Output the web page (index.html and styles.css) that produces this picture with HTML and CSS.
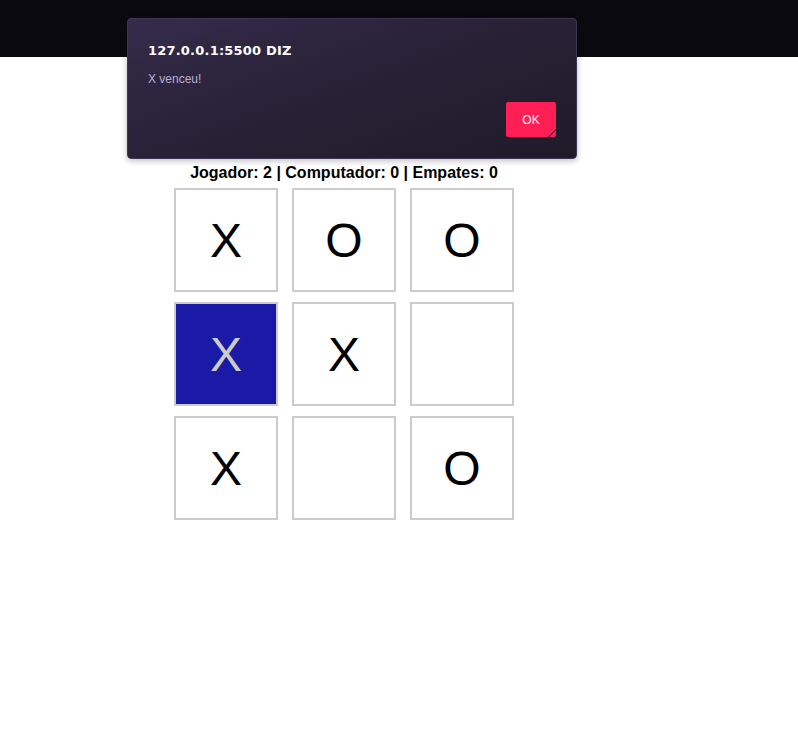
FILE: index.html
```html
<!DOCTYPE html>
<html lang="pt">
<head>
<meta charset="utf-8">
<title>Jogo da Velha</title>
<link rel="stylesheet" href="styles.css">
</head>
<body>
<div class="topbar"></div>
<main class="game">
  <div class="score">Jogador: 2 | Computador: 0 | Empates: 0</div>
  <div class="board">
    <div class="cell">X</div>
    <div class="cell">O</div>
    <div class="cell">O</div>
    <div class="cell active">X</div>
    <div class="cell">X</div>
    <div class="cell"></div>
    <div class="cell">X</div>
    <div class="cell"></div>
    <div class="cell">O</div>
  </div>
</main>
<div class="dialog" role="alertdialog">
  <div class="dialog-title">127.0.0.1:5500 DIZ</div>
  <div class="dialog-msg">X venceu!</div>
  <div class="dialog-actions">
    <button class="ok">OK</button>
  </div>
</div>
</body>
</html>
```
FILE: styles.css
```css
html, body {
  margin: 0;
  padding: 0;
  background: #ffffff;
}
body {
  font-family: "Liberation Sans", Arial, sans-serif;
  width: 798px;
  height: 745px;
  overflow: hidden;
  position: relative;
}
.topbar {
  height: 57px;
  background: #0b0a10;
}
.game {
  width: 340px;
  margin-left: 174px;
  padding-top: 107px;
  display: flex;
  flex-direction: column;
  align-items: center;
}
.score {
  font-weight: bold;
  font-size: 16px;
  line-height: 18px;
  color: #000;
  white-space: nowrap;
}
.board {
  margin-top: 6px;
  display: grid;
  grid-template-columns: repeat(3, 104px);
  grid-auto-rows: 104px;
  column-gap: 14px;
  row-gap: 10px;
}
.cell {
  box-sizing: border-box;
  border: 2px solid #cccccc;
  background: #fff;
  display: flex;
  align-items: center;
  justify-content: center;
  font-size: 48px;
  color: #000;
}
.cell.active {
  background: #1a1aa6;
  color: #cccccc;
}
.dialog {
  position: absolute;
  left: 127px;
  top: 18px;
  width: 450px;
  height: 141px;
  box-sizing: border-box;
  border: 1px solid #3d3652;
  border-radius: 4px;
  background: linear-gradient(160deg, #352c4b 0%, #2a2339 40%, #1f1b29 100%);
  padding: 25px 20px 20px 20px;
  box-shadow: 0 2px 6px rgba(0,0,0,0.25);
}
.dialog-title {
  font-family: "DejaVu Sans", sans-serif;
  font-weight: bold;
  font-size: 13px;
  line-height: 14px;
  color: #ffffff;
  letter-spacing: 0.2px;
}
.dialog-msg {
  margin-top: 14px;
  font-size: 12px;
  line-height: 14px;
  color: #b9b1d2;
}
.dialog-actions {
  display: flex;
  justify-content: flex-end;
  margin-top: 16px;
}
.ok {
  position: relative;
  width: 50px;
  height: 35px;
  border: none;
  border-radius: 2px;
  background: #ff1f55;
  color: #ffffff;
  font-family: "Liberation Sans", Arial, sans-serif;
  font-size: 12px;
  padding: 0;
  overflow: hidden;
}
.ok::after {
  content: "";
  position: absolute;
  right: 0;
  bottom: 0;
  width: 8px;
  height: 8px;
  background: linear-gradient(135deg, transparent 45%, #6b2a55 45%, #6b2a55 60%, transparent 60%);
}
```
